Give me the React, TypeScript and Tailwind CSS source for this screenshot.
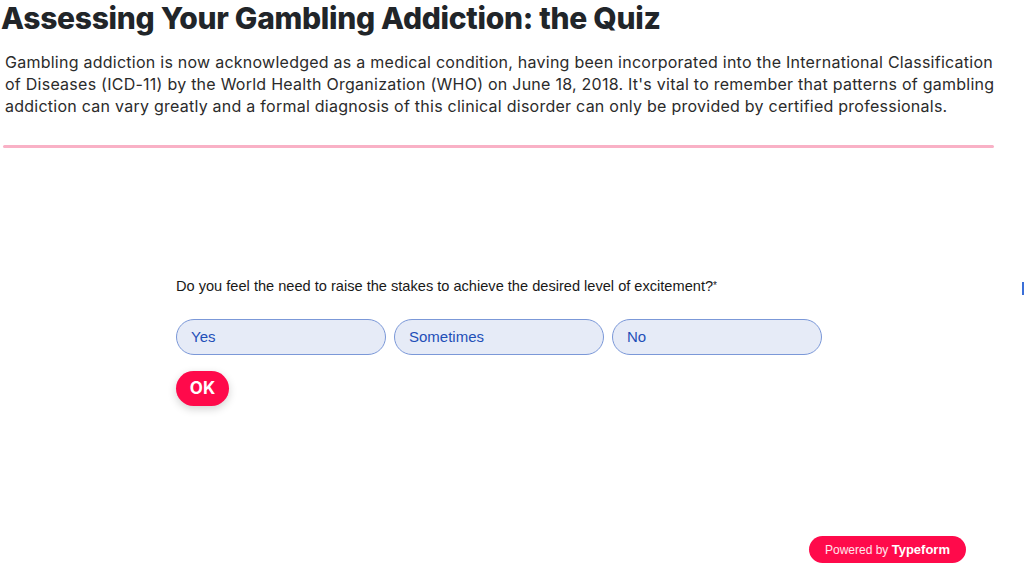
const options = ["Yes", "Sometimes", "No"];

const QuizEmbed = () => {
  return (
    <div className="relative h-[430px] bg-white">
      <div className="pl-[176px] pt-[129px]">
        <p className="text-[14.6px] leading-[18px] text-[#191919] font-['Liberation_Sans',Arial,sans-serif]">
          Do you feel the need to raise the stakes to achieve the desired level of excitement?<span className="text-[10px] align-top">*</span>
        </p>
        <div className="flex gap-2 mt-[24px]">
          {options.map((opt) => (
            <button
              key={opt}
              className="w-[210px] h-[36px] rounded-[18px] border border-[#7b98d8] bg-[#e6ebf7] px-[14px] text-left text-[15px] text-[#1f4fb8] font-['Liberation_Sans',Arial,sans-serif]"
            >
              {opt}
            </button>
          ))}
        </div>
        <button className="mt-[16px] h-[35px] w-[53px] rounded-full bg-[#ff0a4b] text-[17px] font-bold text-white shadow-[0_3px_8px_rgba(0,0,0,0.18)] font-['Inter',sans-serif]">
          OK
        </button>
      </div>
      <div className="absolute right-0 top-[134px] w-[2px] h-[13px] bg-[#3a6fd8]" />
      <div className="absolute left-[809px] top-[388px] flex h-[27px] items-center rounded-full bg-[#ff0a4b] px-[16px] text-[12px] text-white/90 font-['Liberation_Sans',Arial,sans-serif]">
        Powered by&nbsp;<span className="font-bold text-white text-[13px]">Typeform</span>
      </div>
    </div>
  );
};

export default function App() {
  return (
    <div className="w-[1024px] h-[581px] overflow-hidden bg-white font-['Inter',sans-serif]">
      <h1 className="pl-[1px] text-[30px] leading-[36px] font-extrabold tracking-[-0.3px] text-[#212529]">
        Assessing Your Gambling Addiction: the Quiz
      </h1>
      <p className="mt-[15px] pl-[5px] pr-[20px] text-[16px] leading-[22px] tracking-[0.25px] text-[#2b2b2b]">
        Gambling addiction is now acknowledged as a medical condition, having been incorporated into the International Classification of Diseases (ICD-11) by the World Health Organization (WHO) on June 18, 2018. It's vital to remember that patterns of gambling addiction can vary greatly and a formal diagnosis of this clinical disorder can only be provided by certified professionals.
      </p>
      <div className="mx-[3px] mt-[28px] w-[991px] h-[3px] rounded-full bg-[#f9b1c6]" />
      <QuizEmbed />
    </div>
  );
}
